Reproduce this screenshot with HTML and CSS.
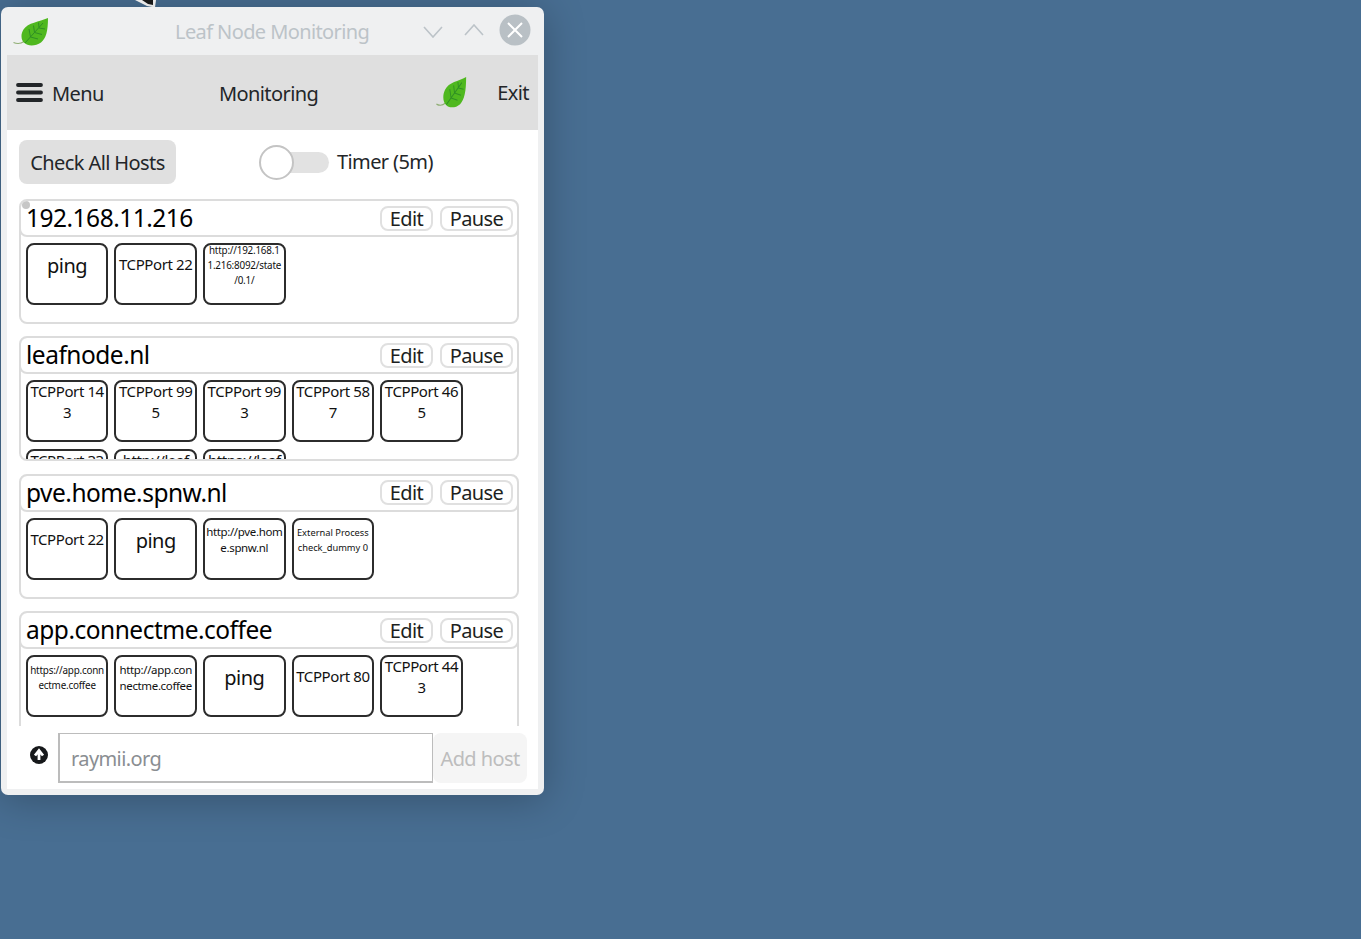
FILE: index.html
```html
<!DOCTYPE html>
<html lang="en">
<head>
<meta charset="utf-8">
<title>Leaf Node Monitoring</title>
<link rel="stylesheet" href="styles.css">
</head>
<body>
<svg width="0" height="0" class="defs">
  <symbol id="leaf" viewBox="0 0 36 28" preserveAspectRatio="none">
    <path d="M0.5 24.5C4 26 7.5 26 11 23.5" fill="none" stroke="#8fae74" stroke-width="1.1"/>
    <path d="M35 0C26 4 15 4.500 10.500 11.500C7 17 8.500 23 11.500 25C15 28.500 23 28 28 24.500C33 20.500 35 13 35 0Z" fill="#4fb81f"/>
    <path d="M30 5L12 25M26 9.500L25.500 4.500M21.500 14.500L20.500 7.500M17.500 19L16 11M26 10L32 11M21.500 14.500L29 16.500M17.500 19L25 21" fill="none" stroke="#2f8f24" stroke-width="1"/>
  </symbol>
</svg>
<svg class="cursor" width="21" height="8" viewBox="0 0 21 8"><path d="M0 0L12 6L20 7.500L21 0Z" fill="#fff"/><path d="M7 0L13 4L18 5L18 0Z" fill="#1a1a1a"/></svg>

<main class="window">
  <div class="titlebar">
    <svg class="title-leaf"><use href="#leaf"/></svg>
    <span class="window-title">Leaf Node Monitoring</span>
    <svg class="chev chev-down" width="20" height="12" viewBox="0 0 20 12"><path d="M1 1L10 11L19 1" fill="none" stroke="#bcc3c8" stroke-width="1.600"/></svg>
    <svg class="chev chev-up" width="20" height="12" viewBox="0 0 20 12"><path d="M1 11L10 1L19 11" fill="none" stroke="#bcc3c8" stroke-width="1.600"/></svg>
    <svg class="close" width="32" height="32" viewBox="0 0 32 32"><circle cx="16" cy="16" r="15.500" fill="#b9c0c5"/><path d="M9 9L23 23M23 9L9 23" stroke="#fff" stroke-width="2"/></svg>
  </div>
  <div class="content">
    <header class="appbar">
      <svg class="burger" width="27" height="19" viewBox="0 0 27 19"><path d="M2 2H25M2 9.500H25M2 17H25" stroke="#232629" stroke-width="3.800" stroke-linecap="round"/></svg>
      <span class="menu-label">Menu</span>
      <span class="page-title">Monitoring</span>
      <svg class="bar-leaf"><use href="#leaf"/></svg>
      <span class="exit">Exit</span>
    </header>

    <div class="toolbar">
      <button class="check-all">Check All Hosts</button>
      <span class="switch"><span class="knob"></span></span>
      <span class="timer">Timer (5m)</span>
    </div>

    <div class="hosts">
      <section class="host">
        <div class="host-head"><span class="dot"></span><h2>192.168.11.216</h2><button class="mini edit">Edit</button><button class="mini pause">Pause</button></div>
        <div class="tiles">
          <div class="tile xl">ping</div>
          <div class="tile">TCPPort 22</div>
          <div class="tile xs">http://192.168.1<br>1.216:8092/state<br>/0.1/</div>
        </div>
      </section>
      <section class="host">
        <div class="host-head"><h2>leafnode.nl</h2><button class="mini edit">Edit</button><button class="mini pause">Pause</button></div>
        <div class="tiles">
          <div class="tile">TCPPort 143</div>
          <div class="tile">TCPPort 995</div>
          <div class="tile">TCPPort 993</div>
          <div class="tile">TCPPort 587</div>
          <div class="tile">TCPPort 465</div>
          <div class="tile">TCPPort 3389</div>
          <div class="tile">http://leafnode.nl</div>
          <div class="tile">https://leafnode.nl</div>
        </div>
      </section>
      <section class="host">
        <div class="host-head"><h2>pve.home.spnw.nl</h2><button class="mini edit">Edit</button><button class="mini pause">Pause</button></div>
        <div class="tiles">
          <div class="tile">TCPPort 22</div>
          <div class="tile xl">ping</div>
          <div class="tile sm">http://pve.home.spnw.nl</div>
          <div class="tile xxs">External Process<br>check_dummy 0</div>
        </div>
      </section>
      <section class="host">
        <div class="host-head"><h2>app.connectme.coffee</h2><button class="mini edit">Edit</button><button class="mini pause">Pause</button></div>
        <div class="tiles">
          <div class="tile xs">https://app.conn<br>ectme.coffee</div>
          <div class="tile sm">http://app.connectme.coffee</div>
          <div class="tile xl">ping</div>
          <div class="tile">TCPPort 80</div>
          <div class="tile">TCPPort 443</div>
        </div>
      </section>
    </div>

    <form class="add-row">
      <svg class="up" width="18" height="18" viewBox="0 0 18 18"><circle cx="9" cy="9" r="9" fill="#16181a"/><path d="M9 14V6M5 9.500L9 4.500L13 9.500" fill="none" stroke="#fff" stroke-width="2.800"/></svg>
      <input class="host-input" type="text" placeholder="raymii.org">
      <button class="add" type="button" disabled>Add host</button>
    </form>
  </div>
</main>
</body>
</html>
```
FILE: styles.css
```css
* { box-sizing: border-box; }
html, body { margin: 0; height: 100%; }
body {
  background: #486e92;
  font-family: "Noto Sans", sans-serif;
  color: #232629;
  overflow: hidden;
  position: relative;
}
.defs { position: absolute; }
.cursor { position: absolute; left: 135px; top: 0; }

.window {
  position: absolute;
  left: 1px;
  top: 7px;
  width: 543px;
  height: 788px;
  background: #eff0f1;
  border-radius: 7px;
  padding: 0 6px 6px;
  display: flex;
  flex-direction: column;
  box-shadow: 0 4px 40px rgba(0, 0, 0, .26);
}

.titlebar {
  height: 48px;
  flex: none;
  display: flex;
  align-items: center;
  position: relative;
}
.title-leaf { width: 36px; height: 28px; margin-left: 6px; margin-top: 2px; flex: none; }
.window-title {
  font-size: 20px;
  letter-spacing: -.6px;
  color: #bcc3c8;
  margin-left: 126px;
  width: 235px;
  margin-top: 1px;
}
.chev { flex: none; }
.chev-down { margin-left: 13px; margin-top: 1px; }
.chev-up { margin-left: 21px; margin-top: -3px; }
.close { flex: none; margin-left: 15px; margin-top: -2px; }

.content {
  flex: 1;
  min-height: 0;
  background: #fff;
  display: flex;
  flex-direction: column;
}

.appbar {
  height: 75px;
  flex: none;
  background: #dfdfdf;
  display: flex;
  align-items: center;
  font-size: 20px;
  letter-spacing: -.6px;
}
.burger { margin-left: 9px; flex: none; margin-top: -1px; }
.menu-label { margin-left: 9px; width: 167px; flex: none; margin-top: 1px; }
.page-title { flex: 1; margin-top: 1px; }
.bar-leaf { width: 31px; height: 31px; flex: none; margin-right: 30px; margin-top: -1px; }
.exit { margin-right: 9px; }

.toolbar {
  height: 69px;
  flex: none;
  display: flex;
  align-items: center;
  padding: 0 0 5px 12px;
  font-size: 20px;
  letter-spacing: -.6px;
}
.check-all {
  width: 157px;
  height: 44px;
  border: 0;
  border-radius: 8px;
  background: #e0e0e0;
  color: #232629;
  font: inherit;
  letter-spacing: inherit;
  padding: 1px 0 0;
}
.switch {
  position: relative;
  width: 67px;
  height: 21px;
  margin-left: 86px;
  border-radius: 11px;
  background: #e2e2e2;
  flex: none;
}
.knob {
  position: absolute;
  left: -3px;
  top: -7px;
  width: 35px;
  height: 35px;
  border-radius: 50%;
  background: #fff;
  border: 2px solid #c4c4c4;
}
.timer { margin-left: 8px; margin-top: -1px; }

.hosts {
  flex: 1;
  min-height: 0;
  overflow: hidden;
  padding: 0 19px 0 12px;
  display: flex;
  flex-direction: column;
  gap: 12.400px;
}
.host {
  flex: none;
  height: 125px;
  border: 2px solid #dcdcdc;
  border-radius: 8px;
  overflow: hidden;
  position: relative;
  background: #fff;
}
.host-head {
  margin: -2px -2px 0;
  border: 2px solid #dcdcdc;
  border-radius: 8px;
  display: flex;
  align-items: center;
  padding-left: 5px;
  padding-right: 4px;
  gap: 7px;
  height: 38px;
}
.dot {
  position: absolute;
  left: 1px;
  top: 0;
  width: 8px;
  height: 8px;
  border-radius: 50%;
  background: #c6c6c6;
}
.host-head h2 {
  flex: 1;
  margin: 0;
  font-size: 24.500px;
  letter-spacing: -.5px;
  font-weight: 400;
  color: #000;
  line-height: 32px;
}
.mini {
  height: 25px;
  background: #fff;
  border: 2px solid #e0e0e0;
  border-radius: 8px;
  font: 400 20px "Noto Sans", sans-serif;
  letter-spacing: -.6px;
  color: #1d1f21;
  padding: 0;
  line-height: 19px;
}
.edit { width: 53px; }
.pause { width: 73px; }

.tiles {
  display: flex;
  flex-wrap: wrap;
  gap: 7px 6px;
  padding: 6px 0 0 4.800px;
}
.tile {
  width: 82.600px;
  height: 62px;
  border: 2px solid #2c2c2c;
  border-radius: 8px;
  padding: 0 2px 19px;
  display: flex;
  align-items: center;
  justify-content: center;
  text-align: center;
  font-size: 15px;
  letter-spacing: -.4px;
  line-height: 21px;
  color: #111;
  word-break: break-all;
  overflow: hidden;
}
.xl { font-size: 20px; letter-spacing: -.5px; padding-bottom: 17px; }
.sm { font-size: 11.500px; letter-spacing: -.35px; line-height: 16px; padding: 0 1px 17px; }
.xs { font-size: 9.900px; letter-spacing: -.22px; line-height: 15px; padding: 0 1px 17px; }
.xxs { font-size: 9.300px; letter-spacing: 0; line-height: 15px; padding-bottom: 17px; }

.add-row {
  height: 63px;
  flex: none;
  display: flex;
  align-items: flex-start;
  padding: 7px 11px 0 23px;
  font-size: 20px;
  letter-spacing: -.6px;
}
.up { flex: none; margin-top: 13px; }
.host-input {
  width: 375px;
  height: 50px;
  margin-left: 10px;
  border: 2px solid #bcbcbc;
  border-top-width: 1px;
  border-right-width: 1px;
  padding: 1px 11px 0;
  font: inherit;
  letter-spacing: inherit;
  color: #232629;
  outline: none;
}
.host-input::placeholder { color: #8a8e92; opacity: 1; }
.add {
  width: 94px;
  height: 50px;
  border: 0;
  border-radius: 8px;
  background: #f5f5f5;
  color: #bdbdbd;
  font: inherit;
  letter-spacing: inherit;
  padding: 0;
}
```
